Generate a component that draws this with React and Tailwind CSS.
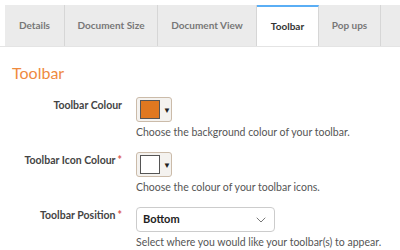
import { ChevronDown } from 'lucide-react';

const tabs = [
  { label: 'Details', w: 'w-[60px]' },
  { label: 'Document Size', w: 'w-[93px]' },
  { label: 'Document View', w: 'w-[99px]' },
  { label: 'Toolbar', w: 'w-[62px]', active: true },
  { label: 'Pop ups', w: 'w-[62px]' },
  { label: 'Buttons', w: 'w-[80px]' },
];

function Swatch({ color }) {
  return (
    <div className="flex items-center w-[36px] h-[25px] border border-[#cbbba9] rounded-[3px] bg-[#f4f2ef] pl-[3px]">
      <div className="w-[21px] h-[19px] border border-[#555]" style={{ background: color }} />
      <span className="ml-[3px] text-[8px] leading-none text-[#222]">▼</span>
    </div>
  );
}

function Row({ label, required, children, help }) {
  return (
    <div className="flex">
      <div className="w-[124px] pr-[2px] text-right text-[10.5px] font-bold text-[#444] leading-[16px] whitespace-nowrap">
        {label}
        {required && <span className="text-[#d9534f] ml-[2px]">*</span>}
      </div>
      <div className="ml-[12px]">
        {children}
        <div className="text-[10.5px] text-[#555] leading-[14px] mt-[3px] whitespace-nowrap">{help}</div>
      </div>
    </div>
  );
}

export default function App() {
  return (
    <div className="w-[400px] h-[250px] overflow-hidden bg-white font-['Lato',sans-serif]">
      <div className="flex pl-[5px] pt-[5px] border-b border-[#e4e4e4]">
        {tabs.map(t => (
          <div
            key={t.label}
            className={`${t.w} shrink-0 h-[41px] flex items-center justify-center text-[10px] font-bold border-r border-[#d6d6d6] ${t.active ? 'bg-white text-[#333] border-t-2 border-t-[#5aaef5]' : 'bg-[#ebebeb] text-[#777]'}`}
          >
            {t.label}
          </div>
        ))}
      </div>

      <h2 className="pl-[12px] mt-[15px] text-[16px] leading-[22px] text-[#ef8a3e]">Toolbar</h2>

      <div className="mt-[13px] flex flex-col gap-[13px]">
        <Row label="Toolbar Colour" help="Choose the background colour of your toolbar.">
          <Swatch color="#e07820" />
        </Row>
        <Row label="Toolbar Icon Colour" required help="Choose the colour of your toolbar icons.">
          <Swatch color="#ffffff" />
        </Row>
        <Row label="Toolbar Position" required help="Select where you would like your toolbar(s) to appear.">
          <div className="w-[139px] h-[25px] border border-[#ccc] rounded-[4px] flex items-center justify-between pl-[6px] pr-[5px] text-[11px] font-bold text-[#222]">
            Bottom
            <ChevronDown size={16} strokeWidth={1.5} className="text-[#777]" />
          </div>
        </Row>
      </div>
    </div>
  );
}
